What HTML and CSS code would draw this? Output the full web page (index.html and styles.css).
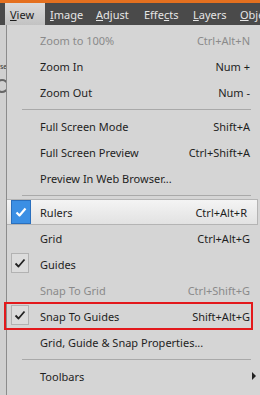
FILE: index.html
```html
<!DOCTYPE html>
<html lang="en">
<head>
  <meta charset="UTF-8" />
  <title>View Menu</title>
  <link rel="stylesheet" href="styles.css">
</head>
<body>

  <div class="menubar">
    <span class="menubar-item open"><u>V</u>iew</span>
    <span class="menubar-item"><u>I</u>mage</span>
    <span class="menubar-item"><u>A</u>djust</span>
    <span class="menubar-item">Effe<u>c</u>ts</span>
    <span class="menubar-item"><u>L</u>ayers</span>
    <span class="menubar-item"><u>O</u>bject</span>
  </div>

  <div class="workspace">
    <div class="side-panel">
      <span class="side-label">se</span>
      <span class="side-icon"></span>
    </div>

    <div class="menu">
      <div class="item disabled"><span class="label">Zoom to 100%</span><span class="key">Ctrl+Alt+N</span></div>
      <div class="item"><span class="label">Zoom In</span><span class="key">Num +</span></div>
      <div class="item"><span class="label">Zoom Out</span><span class="key">Num -</span></div>
      <div class="sep"></div>
      <div class="item"><span class="label">Full Screen Mode</span><span class="key">Shift+A</span></div>
      <div class="item"><span class="label">Full Screen Preview</span><span class="key">Ctrl+Shift+A</span></div>
      <div class="item"><span class="label">Preview In Web Browser...</span></div>
      <div class="sep"></div>
      <div class="item hover">
        <span class="check active">
          <svg width="12" height="10" viewBox="0 0 12 10"><path d="M1.5 5.5 L4.5 8.5 L10.5 1.5" fill="none" stroke="#fff" stroke-width="2.2" stroke-linejoin="round"/></svg>
        </span>
        <span class="label">Rulers</span><span class="key">Ctrl+Alt+R</span>
      </div>
      <div class="item"><span class="label">Grid</span><span class="key">Ctrl+Alt+G</span></div>
      <div class="item">
        <span class="check">
          <svg width="12" height="10" viewBox="0 0 12 10"><path d="M1.5 5.5 L4.5 8.5 L10.5 1.5" fill="none" stroke="#222" stroke-width="1.8" stroke-linejoin="round"/></svg>
        </span>
        <span class="label">Guides</span>
      </div>
      <div class="item disabled"><span class="label">Snap To Grid</span><span class="key">Ctrl+Shift+G</span></div>
      <div class="item marked">
        <span class="check">
          <svg width="12" height="10" viewBox="0 0 12 10"><path d="M1.5 5.5 L4.5 8.5 L10.5 1.5" fill="none" stroke="#222" stroke-width="1.8" stroke-linejoin="round"/></svg>
        </span>
        <span class="label">Snap To Guides</span><span class="key">Shift+Alt+G</span>
        <span class="red-box"></span>
      </div>
      <div class="item"><span class="label">Grid, Guide &amp; Snap Properties...</span></div>
      <div class="sep"></div>
      <div class="item"><span class="label">Toolbars</span><span class="arrow"></span></div>
    </div>
  </div>

</body>
</html>
```

FILE: styles.css
```css
body {
  margin: 0;
  width: 260px;
  height: 395px;
  overflow: hidden;
  font-family: "Noto Sans", "Open Sans", sans-serif;
  font-size: 11px;
  background: #d3d3d3;
}
.menubar {
  display: flex;
  height: 22px;
  border-top: 3px solid #e4701f;
  background: #4a4a4a;
  padding-left: 5px;
  white-space: nowrap;
}
.menubar-item {
  display: flex;
  align-items: center;
  flex-shrink: 0;
  padding-left: 5px;
  color: #e6e6e6;
}
.menubar-item:nth-child(1) { width: 35px; }
.menubar-item:nth-child(2) { width: 41px; }
.menubar-item:nth-child(3) { width: 43px; }
.menubar-item:nth-child(4) { width: 44px; }
.menubar-item:nth-child(5) { width: 42px; }
.menubar-item.open {
  color: #1c1c1c;
  background: linear-gradient(#dadada, #c2c2c2);
}
.workspace {
  display: flex;
  height: 370px;
}
.side-panel {
  width: 6px;
  flex-shrink: 0;
  display: flex;
  flex-direction: column;
  align-items: flex-start;
  overflow: hidden;
  background: #d0d0d0;
  border-right: 1px solid #8c8c8c;
  padding-top: 37px;
}
.side-label {
  font-size: 7px;
  color: #333;
}
.side-icon {
  width: 10px;
  height: 10px;
  margin-top: 8px;
  margin-left: -5px;
  border: 2px solid #666;
  border-radius: 50%;
}
.menu {
  flex: 1;
  padding-top: 2px;
  background: #d5d5d5;
}
.item {
  position: relative;
  display: flex;
  align-items: center;
  height: 26px;
  padding: 0 10px 0 33px;
  color: #1e1e1e;
  white-space: nowrap;
}
.item .label {
  flex: 1;
}
.item.disabled {
  color: #8a8a8a;
}
.item.hover {
  margin-right: 2px;
  height: 24px;
  border: 1px solid #b4b4b4;
  border-left: none;
  background: linear-gradient(#f4f4f4, #e2e2e2);
}
.check {
  position: absolute;
  left: 4px;
  top: 2px;
  width: 18px;
  height: 20px;
  display: flex;
  align-items: center;
  justify-content: center;
  border: 1px solid #b2b2b2;
  background: #dcdcdc;
  box-sizing: border-box;
}
.item.hover .check {
  top: 0;
  height: 24px;
  width: 20px;
}
.check.active {
  background: #3b8fe4;
  border-color: #2a6fbd;
}
.sep {
  height: 8px;
  display: flex;
  align-items: center;
  padding: 0 9px 0 15px;
}
.sep::before {
  content: "";
  flex: 1;
  height: 1px;
  background: #a9a9a9;
}
.red-box {
  position: absolute;
  left: -3px;
  right: 7px;
  top: -1px;
  bottom: -1px;
  border: 2px solid #e3191c;
}
.arrow {
  margin-right: -6px;
  width: 0;
  height: 0;
  border-top: 4px solid transparent;
  border-bottom: 4px solid transparent;
  border-left: 4px solid #222;
}
```
